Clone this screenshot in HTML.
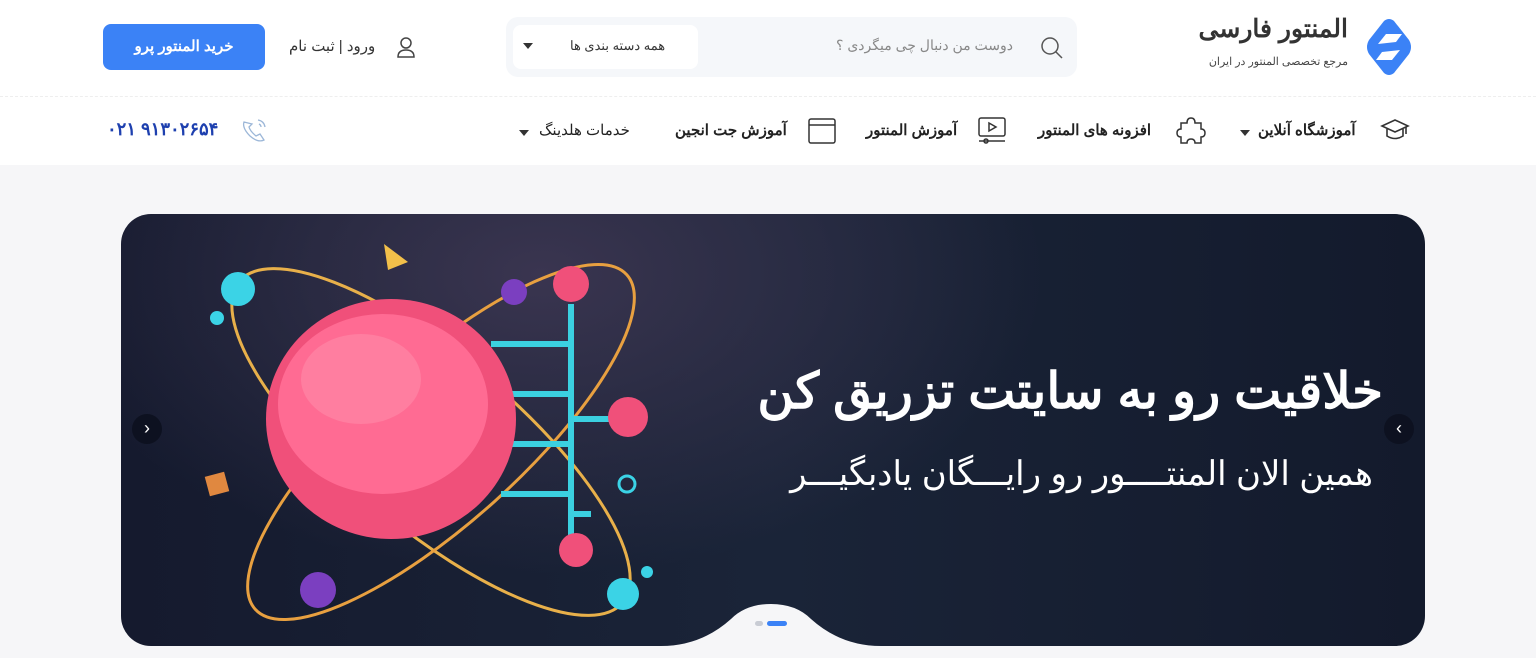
<!DOCTYPE html>
<html lang="fa" dir="rtl"><head><meta charset="utf-8">
<style>
*{margin:0;padding:0;box-sizing:border-box}
body{width:1536px;height:658px;overflow:hidden;background:#f6f6f8;font-family:"Liberation Sans","Noto Sans CJK SC",sans-serif;position:relative;color:#333}
.hdr{position:absolute;left:0;top:0;width:1536px;height:165px;background:#fff}
.abs{position:absolute}
.sep{position:absolute;left:0;top:96px;width:1536px;border-top:1px dashed #eee}
.nav{position:absolute;top:121px;font-size:15px;color:#222;font-weight:bold;white-space:nowrap}
</style></head><body>
<div class="hdr">
 <svg class="abs" style="left:1364px;top:18px" width="50" height="58" viewBox="0 0 50 58">
  <path d="M20 3 Q25 -1 30 3 L45 22 Q49 29 45 36 L30 55 Q25 59 20 55 L5 36 Q1 29 5 22 Z" fill="#3b82f6"/>
  <path d="M14 26 L22 16 L38 16 L32 24 Z" fill="#fff"/>
  <path d="M36 32 L28 42 L12 42 L18 34 Z" fill="#fff"/>
 </svg>
 <div class="abs" style="left:1180px;top:14px;width:168px;text-align:right;font-size:25px;font-weight:bold;color:#333">المنتور فارسی</div>
 <div class="abs" style="left:1180px;top:55px;width:168px;text-align:right;font-size:11px;color:#444">مرجع تخصصی المنتور در ایران</div>
 <div class="abs" style="left:506px;top:17px;width:571px;height:60px;background:#f5f7fa;border-radius:12px"></div>
 <div class="abs" style="left:513px;top:25px;width:185px;height:44px;background:#fff;border-radius:8px"></div>
 <div class="abs" style="left:570px;top:38px;font-size:13px;color:#333">همه دسته بندی ها</div>
 <div class="abs" style="left:523px;top:43px;width:0;height:0;border-left:5px solid transparent;border-right:5px solid transparent;border-top:6px solid #333"></div>
 <div class="abs" style="left:836px;top:37px;font-size:14px;color:#888">دوست من دنبال چی میگردی ؟</div>
 <svg class="abs" style="left:1040px;top:36px" width="24" height="24" viewBox="0 0 24 24" fill="none" stroke="#555" stroke-width="1.5"><circle cx="10" cy="10" r="8"/><path d="M16 16 L22 22"/></svg>
 <svg class="abs" style="left:395px;top:36px" width="22" height="22" viewBox="0 0 22 22" fill="none" stroke="#444" stroke-width="1.5"><circle cx="11" cy="7" r="5"/><path d="M3 21 Q3 14 11 14 Q19 14 19 21 Z"/></svg>
 <div class="abs" style="left:289px;top:37px;font-size:15px;color:#333">ورود | ثبت نام</div>
 <div class="abs" style="left:103px;top:24px;width:162px;height:46px;background:#3b82f6;border-radius:8px;color:#fff;font-size:15px;font-weight:bold;text-align:center;line-height:46px">خرید المنتور پرو</div>
 <div class="sep"></div>
 <svg class="abs" style="left:1380px;top:118px" width="30" height="24" viewBox="0 0 30 24" fill="none" stroke="#333" stroke-width="1.6"><path d="M2 8 L15 2 L28 8 L15 14 Z"/><path d="M7 11 V18 Q15 23 23 18 V11"/><path d="M26 9 V16"/></svg>
 <div class="nav" style="left:1258px">آموزشگاه آنلاین</div>
 <div class="abs" style="left:1240px;top:130px;border-left:5px solid transparent;border-right:5px solid transparent;border-top:6px solid #333"></div>
 <svg class="abs" style="left:1175px;top:115px" width="32" height="32" viewBox="0 0 32 32" fill="none" stroke="#333" stroke-width="1.5"><path d="M6 8 H12 Q12 3 16 3 Q20 3 20 8 H26 V14 Q30 14 30 18 Q30 22 26 22 V28 H20 Q20 24 16 24 Q12 24 12 28 H6 V22 Q2 22 2 18 Q2 14 6 14 Z"/></svg>
 <div class="nav" style="left:1038px">افزونه های المنتور</div>
 <svg class="abs" style="left:977px;top:116px" width="30" height="28" viewBox="0 0 30 28" fill="none" stroke="#333" stroke-width="1.5"><rect x="2" y="2" width="26" height="18" rx="2"/><path d="M12 7 L19 11 L12 15 Z"/><path d="M2 25 H28"/><circle cx="9" cy="25" r="2"/></svg>
 <div class="nav" style="left:866px">آموزش المنتور</div>
 <svg class="abs" style="left:807px;top:117px" width="30" height="28" viewBox="0 0 30 28" fill="none" stroke="#333" stroke-width="1.5"><rect x="2" y="2" width="26" height="24" rx="2"/><path d="M2 8 H28"/></svg>
 <div class="nav" style="left:675px">آموزش جت انجین</div>
 <div class="nav" style="left:539px;font-weight:normal">خدمات هلدینگ</div>
 <div class="abs" style="left:519px;top:130px;border-left:5px solid transparent;border-right:5px solid transparent;border-top:6px solid #333"></div>
 <svg class="abs" style="left:240px;top:116px" width="30" height="28" viewBox="0 0 30 28" fill="none" stroke="#9cb7d8" stroke-width="1.3"><path d="M4 6 Q2 12 10 20 Q18 27 24 24 L20 18 L16 20 Q10 15 9 11 L12 8 Z"/><path d="M18 4 Q24 5 25 11"/><path d="M19 8 Q21 9 21 11"/></svg>
 <div class="abs" style="left:107px;top:119px;font-size:18px;font-weight:bold;color:#1e40af" dir="ltr">۰۲۱ ۹۱۳۰۲۶۵۴</div>
</div>
<div class="abs" style="left:121px;top:214px;width:1304px;height:432px;border-radius:30px;overflow:hidden;background:radial-gradient(ellipse 500px 300px at 420px 60px,#3a3550 0%,rgba(40,40,70,0) 100%),linear-gradient(90deg,#151a2e 0%,#1a2438 50%,#131a2c 100%)">
 <svg class="abs" style="left:0;top:0" width="1304" height="432">
  <ellipse cx="310" cy="228" rx="250" ry="85" transform="rotate(40 310 228)" fill="none" stroke="#e8b04a" stroke-width="3"/>
  <ellipse cx="320" cy="228" rx="250" ry="80" transform="rotate(-42 320 228)" fill="none" stroke="#e8a040" stroke-width="3"/>
  <path d="M450 90 L450 330 M450 130 H370 M450 180 H380 M450 205 H500 M450 230 H390 M450 280 H380 M450 300 H470" stroke="#3bd0e0" stroke-width="6" fill="none"/>
  <ellipse cx="270" cy="205" rx="125" ry="120" fill="#f0507a"/>
  <ellipse cx="262" cy="190" rx="105" ry="90" fill="#ff6b93"/>
  <ellipse cx="240" cy="165" rx="60" ry="45" fill="#ff8aa8" opacity=".6"/>
  <circle cx="117" cy="75" r="17" fill="#3bd3e6"/>
  <circle cx="96" cy="104" r="7" fill="#3bd3e6"/>
  <circle cx="450" cy="70" r="18" fill="#f0507a"/>
  <circle cx="393" cy="78" r="13" fill="#7b3fc0"/>
  <circle cx="507" cy="203" r="20" fill="#f0507a"/>
  <circle cx="455" cy="336" r="17" fill="#f0507a"/>
  <circle cx="502" cy="380" r="16" fill="#3bd3e6"/>
  <circle cx="197" cy="376" r="18" fill="#7b3fc0"/>
  <circle cx="526" cy="358" r="6" fill="#3bd3e6"/>
  <circle cx="506" cy="270" r="8" fill="none" stroke="#3bd3e6" stroke-width="3"/>
  <path d="M263 30 L287 48 L267 56 Z" fill="#f2c04a"/>
  <rect x="86" y="260" width="20" height="20" fill="#e08840" transform="rotate(-15 96 270)"/>
 </svg>
 <div class="abs" style="left:560px;top:148px;width:702px;text-align:right;font-size:50px;font-weight:bold;color:#fff;letter-spacing:1px">خلاقیت رو به  سایتت تزریق کن</div>
 <div class="abs" style="left:560px;top:240px;width:692px;text-align:right;font-size:34px;color:#fff;letter-spacing:3px">همین الان المنتــــور رو رایـــگان یادبگیـــر</div>
 <div class="abs" style="left:11px;top:200px;width:30px;height:30px;border-radius:50%;background:#0d1120;color:#fff;text-align:center;line-height:29px;font-size:18px">‹</div>
 <div class="abs" style="left:1263px;top:200px;width:30px;height:30px;border-radius:50%;background:#0d1120;color:#fff;text-align:center;line-height:29px;font-size:18px">›</div>
 <svg class="abs" style="left:540px;top:385px" width="220" height="47"><path d="M0 47 Q40 47 70 20 Q85 5 110 5 Q135 5 150 20 Q180 47 220 47 Z" fill="#f6f6f8"/></svg>
 <div class="abs" style="left:646px;top:407px;width:20px;height:5px;border-radius:3px;background:#3b82f6"></div>
 <div class="abs" style="left:634px;top:407px;width:8px;height:5px;border-radius:3px;background:#c9ccd4"></div>
</div>
</body></html>
